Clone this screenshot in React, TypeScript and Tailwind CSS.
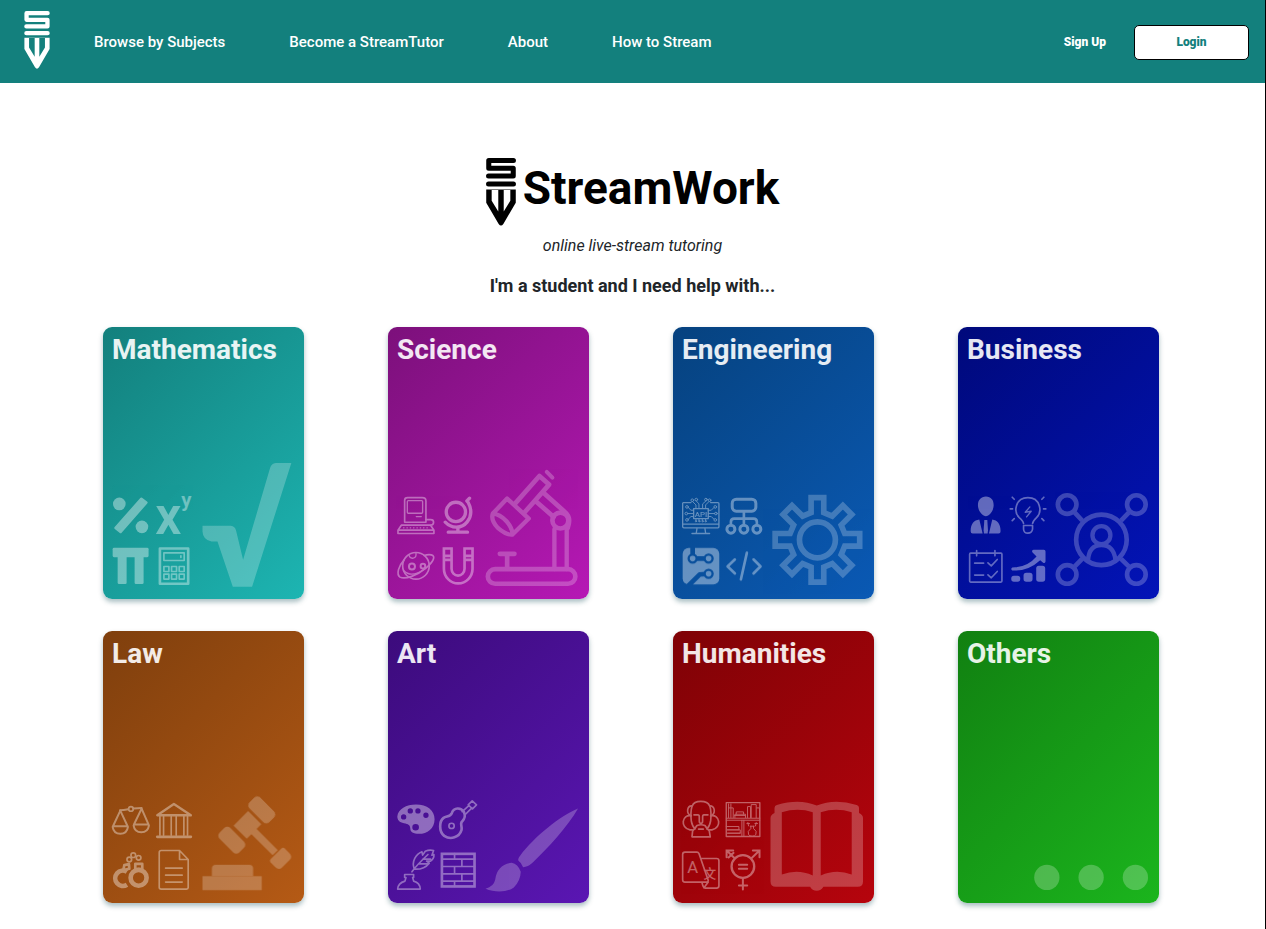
import type { ReactNode } from "react";

function PencilMark({ className }: { className: string }) {
  return (
    <svg viewBox="75 33 76 175" className={className} fill="currentColor" aria-hidden="true">
      <path
        d="M145 39.5H81.5V59.5H144.5V79.5H81M81 100H145"
        fill="none"
        stroke="currentColor"
        strokeWidth="13"
        strokeLinecap="round"
        strokeLinejoin="round"
      />
      <path
        fillRule="evenodd"
        d="M75 114H151V148L119 203Q113 211 107 203L75 148ZM89 113V143L106 171V113ZM137 113V143L120 171V113Z"
      />
    </svg>
  );
}

/* Art board shared by all cards: three units per pixel. */
function Art({ top, small, large }: { top: number; small?: ReactNode; large: ReactNode }) {
  return (
    <svg
      viewBox={`40 ${top} 604 450`}
      className="block w-full"
      fill="none"
      stroke="#fff"
      strokeWidth="5"
      strokeLinecap="round"
      strokeLinejoin="round"
      aria-hidden="true"
    >
      <g opacity="0.38">{small}</g>
      <g opacity="0.23">{large}</g>
    </svg>
  );
}

const ROW_ONE = -33;
const ROW_TWO = -81;

function gearPath() {
  const base = [
    [-19, -82],
    [-19, -127],
    [19, -127],
    [19, -82],
  ];
  const points: string[] = [];
  for (let i = 0; i < 8; i++) {
    const a = (i * Math.PI) / 4;
    for (const [x, y] of base) {
      const px = 474 + x * Math.cos(a) - y * Math.sin(a);
      const py = 240 + x * Math.sin(a) + y * Math.cos(a);
      points.push(`${px.toFixed(1)},${py.toFixed(1)}`);
    }
  }
  return `M${points.join("L")}Z`;
}

const mathematics = (
  <Art
    top={ROW_ONE}
    small={
      <>
        <g fill="#fff" stroke="none">
          <circle cx="89" cy="132" r="19" />
          <circle cx="157" cy="201" r="19" />
          <path d="M155 117L170 128L93 216L78 204Z" stroke="#fff" strokeWidth="8" />
          <text x="197" y="222" fontFamily="Roboto, sans-serif" fontWeight="600" fontSize="155">x</text>
          <text x="275" y="142" fontFamily="Roboto, sans-serif" fontWeight="600" fontSize="62">y</text>
          <rect x="69" y="264" width="108" height="28" rx="4" />
          <rect x="84" y="280" width="27" height="93" rx="4" />
          <rect x="135" y="280" width="27" height="93" rx="4" />
        </g>
        <rect x="211" y="266" width="85" height="106" strokeWidth="8" />
        <rect x="223" y="279" width="61" height="23" />
        <path d="M274 288V293" />
        {[223, 246, 269].map((x) =>
          [320, 343].map((y) => <rect key={`${x}-${y}`} x={x} y={y} width="15" height="15" />),
        )}
      </>
    }
    large={
      <path
        fill="#fff"
        stroke="none"
        d="M559 9H606L488 381H430L384 245H366Q340 240 339 215V198H424Q437 199 440 213L461 300L542 24Q546 10 559 9Z"
      />
    }
  />
);

const science = (
  <Art
    top={ROW_ONE}
    small={
      <>
        <path d="M90 187V121Q90 113 99 113H143Q154 113 154 123V187Z" />
        <rect x="98" y="122" width="46" height="38" rx="3" strokeWidth="4" />
        <path d="M125 170H140" strokeWidth="4" />
        <path d="M154 179H168Q177 179 177 187T168 196H80L70 211V221H178V211L168 196M70 211H178" strokeWidth="5" />
        <path d="M87 204H162" strokeDasharray="1 9" strokeWidth="4" />
        <circle cx="244" cy="156" r="29" strokeWidth="10" />
        <path d="M212 187C232 208 262 206 278 186Q298 160 281 128L277 123L285 115" strokeWidth="10" />
        <path d="M250 204V216M221 217H279" strokeWidth="10" />
        <circle cx="124" cy="318" r="40" />
        <path d="M88 301C72 318 64 343 76 352C92 360 128 347 154 325C176 306 185 289 170 285Q160 283 149 287" />
        <path d="M88 333Q110 356 151 327M103 286Q106 297 116 295T124 280" strokeWidth="4" />
        <circle cx="112" cy="320" r="9" strokeWidth="6" />
        <circle cx="145" cy="319" r="7" strokeWidth="6" />
        <path
          d="M208 266V327A43 44 0 0 0 294 327V266H270V327A19 20 0 0 1 231 327V266ZM208 288H231M208 300H231M270 288H294M270 300H294"
          strokeWidth="8"
          strokeLinejoin="miter"
        />
      </>
    }
    large={
      <g strokeWidth="14">
        <rect x="340" y="328" width="263" height="44" rx="22" />
        <path d="M540 328V208M577 328V208" strokeWidth="13" />
        <circle cx="558" cy="182" r="24" />
        <path d="M484 124L538 171M508 99L570 155Q592 172 580 204" />
        <path d="M421 132L495 48L524 74L450 158" />
        <path d="M398 116L463 176L414 224Q397 227 370 204Q348 180 355 161ZM355 161Q376 162 396 184Q415 207 414 224" strokeWidth="13" />
        <path d="M517 36L534 53" strokeWidth="12" />
        <path d="M376 282H420M398 284V326" />
      </g>
    }
  />
);

const engineering = (
  <Art
    top={ROW_ONE}
    small={
      <>
        <g strokeWidth="4">
          <path d="M94 128H71Q69 128 69 131V200Q69 204 73 204H175Q178 204 178 200V131Q178 128 175 128H153M69 193H178" />
          <path d="M112 206L110 219M136 206L138 219M97 221H150" />
          <rect x="102" y="146" width="44" height="30" />
          <g strokeWidth="3">
            <path d="M109 145V135L99 125M118 145V132L109 122M129 145V132L140 122M138 145V135L148 125" />
            <path d="M102 151H94L86 143M102 161H84M102 170H94L86 178M146 151H155L163 143M146 161H165M146 170H155L163 178" />
            <circle cx="98" cy="121" r="4" />
            <circle cx="110" cy="119" r="4" />
            <circle cx="139" cy="119" r="4" />
            <circle cx="150" cy="121" r="4" />
            <circle cx="82" cy="141" r="4" />
            <circle cx="80" cy="161" r="4" />
            <circle cx="82" cy="180" r="4" />
            <circle cx="167" cy="141" r="4" />
            <circle cx="169" cy="161" r="4" />
            <circle cx="167" cy="180" r="4" />
            <path d="M109 178V182M118 178V182M128 178V182M138 178V182" />
            <circle cx="109" cy="184" r="2" />
            <circle cx="119" cy="184" r="2" />
            <circle cx="129" cy="184" r="2" />
            <circle cx="138" cy="184" r="2" />
          </g>
          <text x="105" y="170" fill="#fff" stroke="none" fontFamily="Roboto, sans-serif" fontWeight="500" fontSize="24">API</text>
        </g>
        <g strokeWidth="9">
          <rect x="218" y="118" width="71" height="36" rx="12" />
          <path d="M253 158V192M214 192V186Q214 176 224 176H282Q292 176 292 186V192" strokeWidth="8" />
          <circle cx="214" cy="208" r="12" />
          <circle cx="253" cy="208" r="12" />
          <circle cx="292" cy="208" r="12" />
        </g>
        <mask id="board-traces">
          <rect x="60" y="255" width="130" height="130" fill="#fff" stroke="none" />
          <g stroke="#000" strokeWidth="14" strokeLinecap="butt">
            <path d="M99 258V290M104 296H146M150 342L120 344L78 386" />
          </g>
          <g fill="#fff" stroke="#000" strokeWidth="7">
            <circle cx="99" cy="296" r="12" />
            <circle cx="147" cy="296" r="12" />
            <circle cx="147" cy="342" r="12" />
          </g>
        </mask>
        <rect x="69" y="264" width="110" height="110" rx="18" fill="#fff" stroke="none" mask="url(#board-traces)" />
        <path d="M226 299L204 320L226 341M282 299L303 320L282 341M262 279L244 359" strokeWidth="8" />
      </>
    }
    large={
      <g strokeWidth="17" strokeLinejoin="miter">
        <path d={gearPath()} />
        <circle cx="474" cy="240" r="54" />
      </g>
    }
  />
);

const business = (
  <Art
    top={ROW_ONE}
    small={
      <>
        <g fill="#fff" stroke="none">
          <path d="M124 110C140 110 148 122 147 138C146 154 134 169 124 169C114 169 101 154 100 138C99 122 108 110 124 110Z" />
          <path d="M104 179L114 221H84Q78 221 78 214C78 192 88 181 104 179ZM143 179L133 221H162Q168 221 168 214C168 192 158 181 143 179Z" />
          <path d="M119 180H128L130 212L129 221H118L117 212Z" />
        </g>
        <path d="M237 191Q236 183 224 173C206 156 212 113 250 113C288 113 294 156 276 173Q265 183 264 191" />
        <path d="M237 197H264V208Q262 220 250 220T237 208Z" />
        <path d="M256 141L242 157L260 154L246 171" strokeWidth="4" />
        <path d="M203 112L209 118M298 112L292 118M197 147H204M297 147H304M203 182L209 176M298 182L292 176" />
        <rect x="75" y="280" width="97" height="87" rx="3" />
        <path d="M96 272V288M151 272V288M90 310H117M90 346H117M130 309L140 318L158 299M130 345L140 354L158 335" />
        <g fill="#fff" stroke="none">
          <rect x="200" y="348" width="27" height="18" rx="8" />
          <rect x="237" y="339" width="27" height="27" rx="8" />
          <rect x="275" y="318" width="27" height="48" rx="8" />
          <path d="M203 323Q248 323 276 290L264 278Q260 271 267 270H298Q303 270 303 275V305Q301 313 295 308L287 301Q250 335 203 332Q197 328 203 323Z" />
        </g>
      </>
    }
    large={
      <g strokeWidth="14">
        <circle cx="471" cy="240" r="76" />
        <circle cx="471" cy="226" r="27" strokeWidth="13" />
        <path d="M431 300Q434 256 471 256T513 300" strokeWidth="13" />
        <circle cx="368" cy="134" r="28" />
        <circle cx="576" cy="134" r="28" />
        <circle cx="368" cy="344" r="28" />
        <circle cx="576" cy="344" r="28" />
        <path d="M391 158L413 182M553 158L530 182M391 320L413 297M553 320L530 297" strokeLinecap="butt" />
      </g>
    }
  />
);

const law = (
  <Art
    top={ROW_TWO}
    small={
      <>
        <path d="M91 91Q101 91 116 88M131 86Q146 84 156 84" strokeWidth="6" />
        <circle cx="124" cy="87" r="7" />
        <path d="M92 92L70 139H114ZM69 141Q72 162 92 162T115 141M156 86L133 134H177ZM132 137Q135 157 155 157T178 137" strokeWidth="6" />
        <g strokeWidth="7">
          <path d="M203 106L253 72L304 106Z" />
          <path d="M203 171H304" strokeWidth="8" />
          <path d="M211 110V166M222 110V166M245 110V166M260 110V166M283 110V166M294 110V166" strokeWidth="5" />
        </g>
        <path d="M112 315A23 23 0 1 1 112 276" strokeWidth="14" strokeLinecap="butt" />
        <circle cx="147" cy="294" r="24" strokeWidth="14" />
        <path d="M137 252H158V268H137ZM104 256L118 253L119 267L101 271Z" strokeWidth="8" />
        <circle cx="119" cy="239" r="7" />
        <circle cx="131" cy="226" r="7" />
        <circle cx="147" cy="234" r="7" />
        <path d="M215 212H270L296 239V323Q296 328 291 328H215Q209 328 209 323V218Q209 212 215 212ZM270 212V239H296M228 265H278M228 286H278M228 307H278" />
      </>
    }
    large={
      <g fill="#fff" stroke="none">
        <rect x="339" y="289" width="178" height="42" />
        <path d="M367 289V266Q367 255 378 255H480Q491 255 491 266V289Z" />
        <g transform="rotate(45 517 90)">
          <rect x="475" y="67" width="84" height="46" rx="13" />
        </g>
        <g transform="rotate(45 427 181)">
          <rect x="385" y="158" width="84" height="46" rx="13" />
        </g>
        <g transform="rotate(45 474 135)">
          <path d="M446 104H502V124H592V146H502V166H446Z" />
        </g>
        <g transform="rotate(45 574 236)">
          <path d="M561 206H580Q596 206 596 220V252Q596 266 580 266H561Q554 266 554 258V214Q554 206 561 206Z" />
        </g>
      </g>
    }
  />
);

const art = (
  <Art
    top={ROW_TWO}
    small={
      <>
        <path
          fill="#fff"
          stroke="none"
          fillRule="evenodd"
          d="M124 74C158 74 180 92 180 118C180 146 158 162 133 162C116 162 107 157 107 146C107 136 101 132 88 130C74 128 68 120 68 110C70 88 95 74 124 74ZM79 111a8 8 0 1 0 16 0a8 8 0 1 0-16 0ZM99 93a8 8 0 1 0 16 0a8 8 0 1 0-16 0ZM122 93a8 8 0 1 0 16 0a8 8 0 1 0-16 0ZM146 106a8 8 0 1 0 16 0a8 8 0 1 0-16 0ZM113 142a10 10 0 1 0 20 0a10 10 0 1 0-20 0Z"
        />
        <path
          d="M207 114C216 108 227 111 232 99C238 82 259 82 268 96C276 112 267 120 261 127C257 134 263 139 261 150C254 173 228 181 209 168C192 154 194 124 207 114Z"
          strokeWidth="8"
        />
        <circle cx="231" cy="138" r="8" />
        <path d="M263 95L283 77M273 103L292 84M281 75L293 63L306 75L294 87Z" />
        <path d="M112 276Q124 258 160 224M119 268C110 245 124 223 142 216L144 226L152 214Q164 209 177 212L172 226L178 224Q179 236 168 244H156L164 250Q148 270 119 268M145 238H168M132 252H160" />
        <path d="M69 328H137Q136 309 117 304L114 293H117V284H90V293H94L91 304Q70 310 69 328Z" />
        <rect x="202" y="222" width="98" height="98" strokeWidth="8" strokeLinejoin="miter" />
        <path d="M202 238H300M202 260H300M202 282H300M202 304H300M240 221V238M262 238V260M240 260V282M262 282V304M240 304V320" />
      </>
    }
    large={
      <g fill="#fff" stroke="none">
        <path d="M611 86C560 106 480 170 437 228Q429 238 432 243Q440 248 446 262Q460 262 475 248C520 206 580 140 611 86Z" />
        <path d="M412 249Q430 252 439 276Q438 304 418 323C398 338 362 339 333 327Q358 320 362 300Q368 255 412 249Z" />
      </g>
    }
  />
);

const humanities = (
  <Art
    top={ROW_TWO}
    small={
      <>
        <path d="M95 108C78 102 82 76 98 78C104 60 143 60 150 78C166 76 170 102 153 108C181 102 188 144 157 150H150M95 108C67 102 60 144 91 150H98" />
        <path d="M97 80Q92 96 95 124Q98 140 106 147M151 80Q156 96 153 124Q150 140 142 147M103 105H115Q119 105 119 111V123Q119 130 124 130T129 123V111Q129 105 133 105H145" />
        <path d="M97 171L99 153Q106 147 112 137Q124 132 136 137Q142 147 149 153L152 171ZM117 148H131" />
        <g strokeWidth="4">
          <rect x="200" y="68" width="101" height="102" />
          <path d="M200 115H301M200 121H301M247 121V170M253 121V170M207 113V72M214 113V72M221 113V84H207M225 107H256M226 113V103H258V113M230 103V96H252V103M264 113V80H273V113M275 113V74H290V113M292 84H300V113M200 140H238V150H202M204 150H242V160H204M204 160H242" strokeWidth="3" />
          <path d="M272 139H284M274 139V146Q262 154 267 164Q270 169 278 169T289 164Q294 154 282 146V139M265 128L267 138M290 128L288 138M262 131H270M286 131H294" strokeWidth="3" />
        </g>
        <path d="M76 217H112Q116 217 118 221L146 302Q146 307 141 307H76Q69 307 69 300V224Q69 217 76 217ZM124 236H171Q178 236 178 243V318Q178 325 171 325H137Q132 325 130 319L127 308M133 324L146 307" />
        <g fill="#fff" stroke="none">
          <text x="83" y="280" fontFamily="Roboto, sans-serif" fontWeight="400" fontSize="50">A</text>
          <text x="132" y="294" fontFamily="'Noto Sans CJK SC', sans-serif" fontWeight="500" fontSize="38">文</text>
        </g>
        <circle cx="250" cy="260" r="34" strokeWidth="7" />
        <path
          d="M238 255H263M238 267H263M250 296V329M238 317H263M275 236L299 213M280 212H300V232M226 236L202 213M221 212H201V232M207 233L222 219"
          strokeWidth="6"
          strokeLinejoin="miter"
        />
      </>
    }
    large={
      <path
        fill="#fff"
        stroke="none"
        fillRule="evenodd"
        d="M345 84Q345 77 352 75Q420 55 472 77Q525 55 592 75Q599 77 599 84V99Q611 104 611 115V305Q611 321 595 321H492Q485 333 472 333Q458 333 452 321H349Q333 321 333 305V115Q333 104 345 99ZM367 97Q415 82 460 97V287Q415 266 367 284ZM484 97Q530 82 577 97V284Q530 266 484 287Z"
      />
    }
  />
);

const others = (
  <Art
    top={ROW_TWO}
    large={
      <g fill="#fff" stroke="none">
        <circle cx="307" cy="293" r="38" />
        <circle cx="440" cy="293" r="38" />
        <circle cx="573" cy="293" r="38" />
      </g>
    }
  />
);

const subjects = [
  { name: "Mathematics", gradient: "from-[#13807d] to-[#1db5b2]", drawing: mathematics },
  { name: "Science", gradient: "from-[#7c107b] to-[#b618b5]", drawing: science },
  { name: "Engineering", gradient: "from-[#06427f] to-[#0b5ab5]", drawing: engineering },
  { name: "Business", gradient: "from-[#00097b] to-[#0314b8]", drawing: business },
  { name: "Law", gradient: "from-[#7f3f0d] to-[#b55a15]", drawing: law },
  { name: "Art", gradient: "from-[#3c0b7c] to-[#5a16b3]", drawing: art },
  { name: "Humanities", gradient: "from-[#7f0206] to-[#b6040d]", drawing: humanities },
  { name: "Others", gradient: "from-[#118011] to-[#1bb51d]", drawing: others },
];

const links = ["Browse by Subjects", "Become a StreamTutor", "About", "How to Stream"];

export default function App() {
  return (
    <div className="min-h-screen border-r border-black bg-white font-['Roboto',sans-serif] text-[#212529]">
      <header className="flex items-center bg-[#13807d] pt-[11px] pr-4 pb-[10px] pl-6 text-white">
        <a href="#home" aria-label="StreamWork home" className="pb-1">
          <PencilMark className="h-[58px] w-[26px]" />
        </a>
        <nav className="ml-11 flex flex-1 items-center gap-16 text-[15px] leading-6 font-medium">
          {links.map((label) => (
            <a key={label} href="#nav" className="whitespace-nowrap">
              {label}
            </a>
          ))}
        </nav>
        <div className="flex items-center gap-7 text-xs font-black">
          <button type="button" className="whitespace-nowrap">
            Sign Up
          </button>
          <button
            type="button"
            className="h-[35px] w-[115px] rounded-[5px] border border-black bg-white text-[#13807d]"
          >
            Login
          </button>
        </div>
      </header>

      <main className="pt-[75px] pb-[26px]">
        <div className="flex flex-col items-center">
          <h1 className="flex items-center gap-[7px] text-[46px] leading-[68px] font-bold text-black">
            <PencilMark className="h-[68px] w-[30px]" />
            <span className="-mt-2">StreamWork</span>
          </h1>
          <p className="mt-2 text-base leading-6 italic">online live-stream tutoring</p>
          <p className="mt-4 text-lg leading-6 font-bold">I'm a student and I need help with...</p>
        </div>

        <div className="pr-[3px]">
          <div className="mx-auto mt-[29px] grid max-w-[1140px] grid-cols-2 justify-items-center gap-y-8 md:grid-cols-4">
            {subjects.map(({ name, gradient, drawing }) => (
              <a
                key={name}
                href="#subject"
                className={`flex aspect-[201/272] w-[201px] flex-col justify-between overflow-hidden rounded-[9px] bg-linear-135 shadow-[0_3px_5px_rgba(10,70,80,0.35)] ${gradient}`}
              >
                <h2 className="px-[9px] pt-[5px] text-[28px] leading-9 font-bold text-white/90">{name}</h2>
                {drawing}
              </a>
            ))}
          </div>
        </div>
      </main>
    </div>
  );
}
